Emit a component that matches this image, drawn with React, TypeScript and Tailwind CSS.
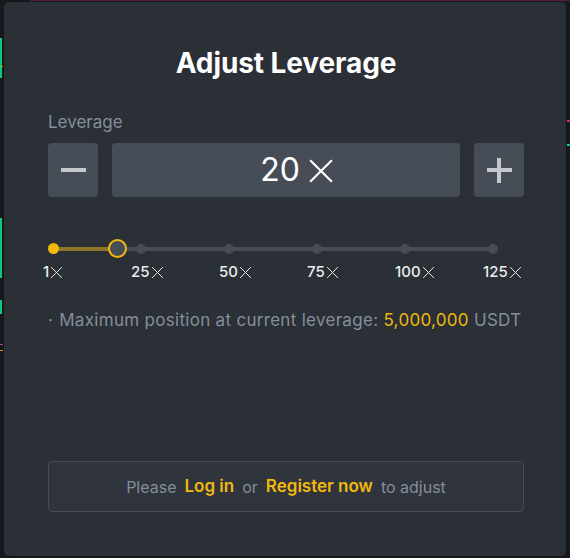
import React from "react";

const XMark = ({ size, stroke }: { size: number; stroke: number }) => (
  <svg width={size} height={size} viewBox="0 0 24 24" fill="none" stroke="currentColor" strokeWidth={stroke} strokeLinecap="butt">
    <path d="M2 2 L22 22 M22 2 L2 22" />
  </svg>
);

const ticks = ["1", "25", "50", "75", "100", "125"];

export default function App() {
  return (
    <div className="relative w-[570px] h-[558px] bg-[#15181d] overflow-hidden" style={{ fontFamily: "Inter, 'Noto Sans', sans-serif" }}>
      {/* background chart remnants */}
      <div className="absolute left-0 top-[38px] w-[2px] h-[40px] bg-[#0ecb81]" />
      <div className="absolute left-0 top-[66px] w-[3px] h-[1px] bg-[#c99400]" />
      <div className="absolute left-0 top-[218px] w-[2px] h-[60px] bg-[#0ecb81]" />
      <div className="absolute left-0 top-[300px] w-[2px] h-[14px] bg-[#0ecb81]" />
      <div className="absolute left-0 top-[344px] w-[3px] h-[1px] bg-[#c23fa6]" />
      <div className="absolute left-0 top-[350px] w-[3px] h-[1px] bg-[#c99400]" />
      <div className="absolute left-[30px] top-0 w-[540px] h-[1px] bg-[#5a1a3a]" />
      <div className="absolute right-0 top-[120px] w-[3px] h-[2px] bg-[#cf304a]" />
      <div className="absolute right-0 top-[144px] w-[3px] h-[2px] bg-[#0ecb81]" />

      <div className="ml-[4px] mt-[2px] w-[562px] h-[554px] rounded-[5px] bg-[#2b2f36] flex flex-col pt-[45px] pl-[44px] pr-[42px]">
        <div className="text-center text-white text-[28px] leading-[32px] font-bold tracking-[-0.1px]">Adjust Leverage</div>

        <div className="mt-[33px] text-[#848e9c] text-[17px] leading-[20px]">Leverage</div>

        <div className="mt-[11px] flex gap-[14px] h-[54px]">
          <div className="w-[50px] rounded-[4px] bg-[#474d57] flex items-center justify-center">
            <div className="w-[25px] h-[4px] bg-[#c5c8cc]" />
          </div>
          <div className="flex-1 rounded-[4px] bg-[#474d57] flex items-center justify-center gap-[8px] pl-[22px] text-white">
            <span className="text-[32px] leading-[36px]">20</span>
            <span className="text-white pt-[1px]"><XMark size={26} stroke={2} /></span>
          </div>
          <div className="w-[50px] rounded-[4px] bg-[#474d57] flex items-center justify-center relative">
            <div className="w-[25px] h-[4px] bg-[#c5c8cc]" />
            <div className="absolute w-[4px] h-[25px] bg-[#c5c8cc]" />
          </div>
        </div>

        <div className="mt-[42px] relative h-[20px]">
          <div className="absolute left-[5px] w-[441px] top-[8px] h-[4px] bg-[#474d57]" />
          <div className="absolute left-[5px] w-[64px] top-[8px] h-[4px] bg-[#8c7428]" />
          {[93, 181, 269, 357, 445].map((x) => (
            <div key={x} className="absolute top-[5px] w-[10px] h-[10px] rounded-full bg-[#474d57]" style={{ left: x - 5 }} />
          ))}
          <div className="absolute left-0 top-[4px] w-[11px] h-[11px] rounded-full bg-[#f0b90b]" />
          <div className="absolute left-[60px] top-[0px] w-[19px] h-[19px] rounded-full bg-[#474d57] border-[2px] border-[#f0b90b]" />
        </div>

        <div className="mt-[4px] -ml-[5px] flex text-[#eaecef] text-[15px] leading-[18px] font-medium">
          {ticks.map((t) => (
            <div key={t} className="w-[88px] shrink-0 flex items-center gap-[1px]">
              <span>{t}</span>
              <XMark size={13} stroke={1.8} />
            </div>
          ))}
        </div>

        <div className="mt-[27px] text-[17px] leading-[24px] tracking-[0.3px] text-[#848e9c] whitespace-nowrap">
          <span className="mr-[6px]">·</span>Maximum position at current leverage: <span className="text-[#f0b90b]">5,000,000</span> USDT
        </div>

        <div className="mt-[129px] h-[51px] rounded-[4px] border border-[#474d57] bg-[#30343c] flex items-center justify-center text-[16px] text-[#848e9c] gap-[8px]">
          <span>Please</span>
          <span className="text-[#f0b90b] font-semibold text-[17px]">Log in</span>
          <span>or</span>
          <span className="text-[#f0b90b] font-semibold text-[17px]">Register now</span>
          <span>to adjust</span>
        </div>
      </div>
    </div>
  );
}
